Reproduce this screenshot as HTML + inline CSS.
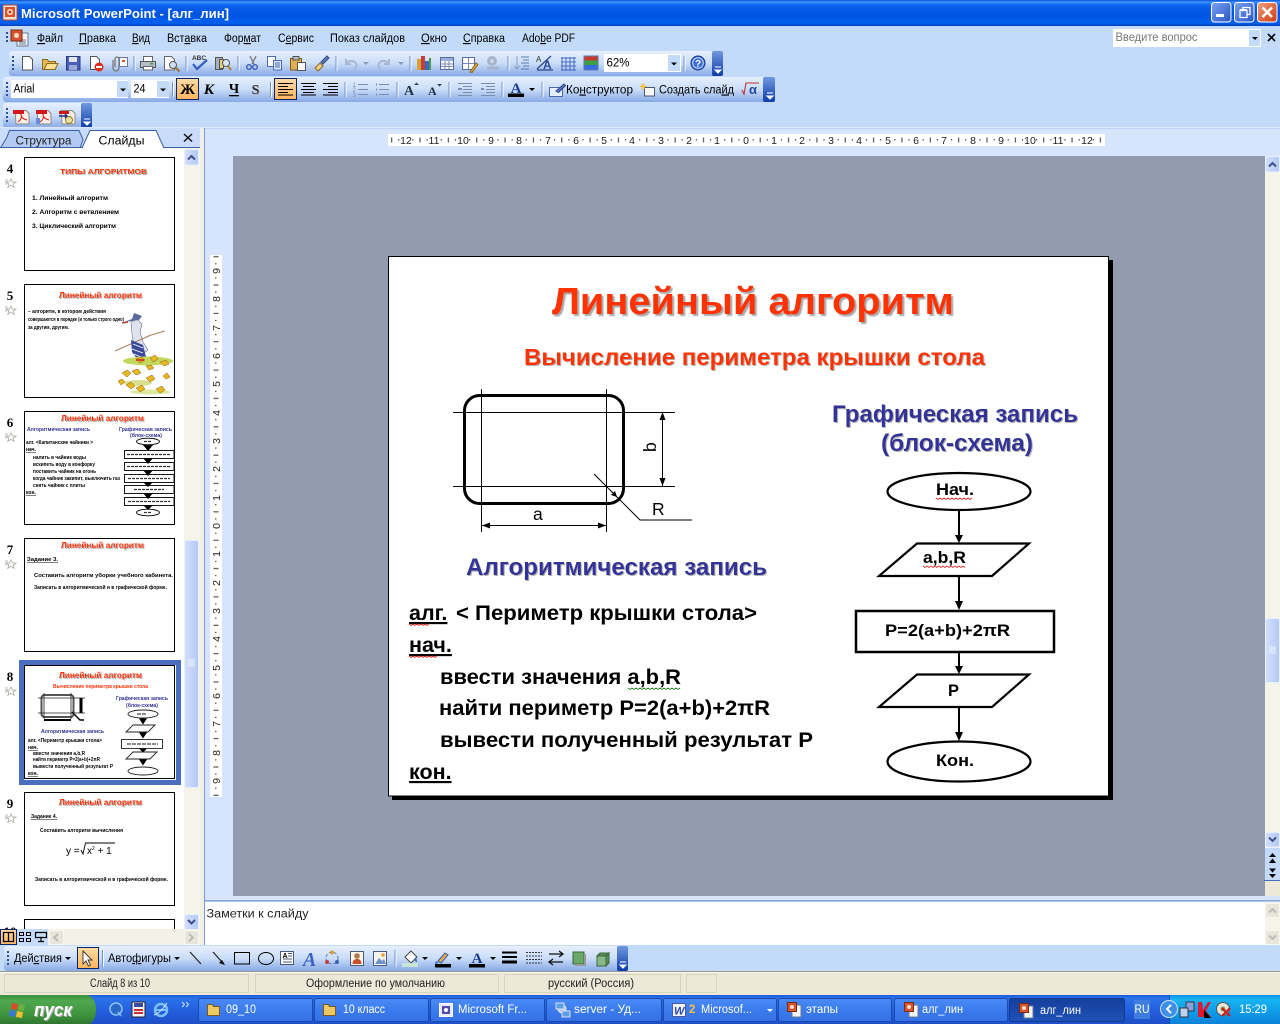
<!DOCTYPE html>
<html lang="ru"><head><meta charset="utf-8"><title>Microsoft PowerPoint</title>
<style>
html,body{margin:0;padding:0;width:1280px;height:1024px;overflow:hidden;background:#c3daf9}
svg{display:block;position:absolute;left:0;top:0}
text{font-family:"Liberation Sans","DejaVu Sans",sans-serif;font-size:11.5px;fill:#000;white-space:pre}
.w{fill:#fff}.b{font-weight:bold}
.t{fill:#ff3300;font-weight:bold}
.bl{fill:#333399;font-weight:bold}
.th{font-size:5px;font-weight:bold}
.n{font-family:"Liberation Serif",serif;font-size:13px;font-weight:bold}
.r{font-size:10.5px;fill:#222}
.u{text-decoration:underline}
</style></head><body>
<svg width="1280" height="1024" viewBox="0 0 1280 1024" xmlns="http://www.w3.org/2000/svg">
<defs>
<linearGradient id="tt" x1="0" y1="0" x2="0" y2="1"><stop offset="0" stop-color="#0a4fd8"/><stop offset=".08" stop-color="#3d95ff"/><stop offset=".2" stop-color="#0a62ee"/><stop offset=".55" stop-color="#0053e1"/><stop offset=".88" stop-color="#0261f0"/><stop offset="1" stop-color="#0042bd"/></linearGradient>
<linearGradient id="tb" x1="0" y1="0" x2="0" y2="1"><stop offset="0" stop-color="#e6f0fe"/><stop offset=".5" stop-color="#c9dcf8"/><stop offset="1" stop-color="#88a9e6"/></linearGradient>
<linearGradient id="ch" x1="0" y1="0" x2="0" y2="1"><stop offset="0" stop-color="#6f98e0"/><stop offset="1" stop-color="#0f3da8"/></linearGradient>
<linearGradient id="or" x1="0" y1="0" x2="0" y2="1"><stop offset="0" stop-color="#ffdca5"/><stop offset="1" stop-color="#ffb35c"/></linearGradient>
<linearGradient id="task" x1="0" y1="0" x2="0" y2="1"><stop offset="0" stop-color="#1f5cd8"/><stop offset=".12" stop-color="#2a74ea"/><stop offset=".5" stop-color="#2560df"/><stop offset="1" stop-color="#1d4fc8"/></linearGradient>
<linearGradient id="tbtn" x1="0" y1="0" x2="0" y2="1"><stop offset="0" stop-color="#4a8cf5"/><stop offset=".5" stop-color="#3b7bee"/><stop offset="1" stop-color="#3570e3"/></linearGradient>
<linearGradient id="tact" x1="0" y1="0" x2="0" y2="1"><stop offset="0" stop-color="#153f9c"/><stop offset="1" stop-color="#1e52b7"/></linearGradient>
<linearGradient id="st" x1="0" y1="0" x2="0" y2="1"><stop offset="0" stop-color="#3c8f3c"/><stop offset=".2" stop-color="#4fa84f"/><stop offset=".7" stop-color="#3c933c"/><stop offset="1" stop-color="#2f752f"/></linearGradient>
<linearGradient id="tr" x1="0" y1="0" x2="0" y2="1"><stop offset="0" stop-color="#0c8fe6"/><stop offset=".15" stop-color="#18b4f2"/><stop offset=".6" stop-color="#0f9ae8"/><stop offset="1" stop-color="#0c82d8"/></linearGradient>
<linearGradient id="sb" x1="0" y1="0" x2="1" y2="0"><stop offset="0" stop-color="#d3e0fb"/><stop offset="1" stop-color="#b3c8f5"/></linearGradient>
<linearGradient id="mn" x1="0" y1="0" x2="1" y2="1"><stop offset="0" stop-color="#7ba2ee"/><stop offset="1" stop-color="#2a55c8"/></linearGradient>
<linearGradient id="cl" x1="0" y1="0" x2="1" y2="1"><stop offset="0" stop-color="#f0a080"/><stop offset="1" stop-color="#cc3a10"/></linearGradient>
<pattern id="rh" x="746" y="134" width="28.35" height="12" patternUnits="userSpaceOnUse"><rect x="6.6" y="5" width="1" height="1.5" fill="#333"/><rect x="13.7" y="3.5" width="1" height="5" fill="#333"/><rect x="20.8" y="5" width="1" height="1.5" fill="#333"/></pattern>
<pattern id="rv" x="210" y="526" width="12" height="28.35" patternUnits="userSpaceOnUse"><rect x="5" y="6.6" width="1.5" height="1" fill="#333"/><rect x="3.5" y="13.7" width="5" height="1" fill="#333"/><rect x="5" y="20.8" width="1.5" height="1" fill="#333"/></pattern>
<filter id="sh" x="-5%" y="-20%" width="110%" height="140%"><feDropShadow dx="2" dy="2" stdDeviation="0.4" flood-color="#a8a8a8"/></filter>
<filter id="s1" x="-5%" y="-20%" width="110%" height="140%"><feDropShadow dx="1" dy="1" stdDeviation="0.2" flood-color="#b0b0b0"/></filter>
</defs>

<!-- base -->
<rect width="1280" height="1024" fill="#c3daf9"/>
<!-- title bar -->
<rect width="1280" height="26" fill="url(#tt)"/>
<rect x="3" y="5" width="14" height="15" rx="1" fill="#e8e2d8" stroke="#c05030"/><rect x="5" y="7" width="10" height="10" fill="#d9532c"/><circle cx="10" cy="12" r="3" fill="#f5e0c8"/><circle cx="10" cy="12" r="1.4" fill="#c03818"/>
<text x="21" y="18" class="w b" style="font-size:13px" textLength="208" lengthAdjust="spacingAndGlyphs">Microsoft PowerPoint - [алг_лин]</text>
<rect x="1211.5" y="2.5" width="19.5" height="19.5" rx="3" fill="url(#mn)" stroke="#fff"/><rect x="1216" y="14" width="8" height="3" fill="#fff"/>
<rect x="1234.5" y="2.5" width="19.5" height="19.5" rx="3" fill="url(#mn)" stroke="#fff"/><path d="M1240 10.5h7v7h-7zM1243 10V7.5h7v7h-2.5" fill="none" stroke="#fff" stroke-width="1.3"/><rect x="1240" y="9" width="7" height="2" fill="#fff"/>
<rect x="1257.5" y="2.5" width="19.5" height="19.5" rx="3" fill="url(#cl)" stroke="#fff"/><path d="M1262.5 7.5l9.5 9.500M1272 7.5l-9.500 9.500" stroke="#fff" stroke-width="2.4"/>

<!-- menu -->
<path d="M7 32v2M7 36v2M7 40v2" stroke="#2a4f9c" stroke-width="2"/>
<rect x="17" y="33" width="11" height="13" fill="#f4f4f0" stroke="#6a7a9a"/><path d="M19 40h7M19 42h7M19 44h7" stroke="#6a7a9a"/><rect x="11" y="30" width="11" height="11" fill="#d9532c" stroke="#7a2a10"/><circle cx="16.5" cy="35.5" r="2.5" fill="#f5e0c8"/>
<text x="37" y="42" textLength="26" lengthAdjust="spacingAndGlyphs"><tspan class="u">Ф</tspan>айл</text>
<text x="79" y="42" textLength="37" lengthAdjust="spacingAndGlyphs"><tspan class="u">П</tspan>равка</text>
<text x="132" y="42" textLength="18" lengthAdjust="spacingAndGlyphs"><tspan class="u">В</tspan>ид</text>
<text x="167" y="42" textLength="40" lengthAdjust="spacingAndGlyphs">Вст<tspan class="u">а</tspan>вка</text>
<text x="224" y="42" textLength="37" lengthAdjust="spacingAndGlyphs">Фор<tspan class="u">м</tspan>ат</text>
<text x="278" y="42" textLength="36" lengthAdjust="spacingAndGlyphs">С<tspan class="u">е</tspan>рвис</text>
<text x="330" y="42" textLength="75" lengthAdjust="spacingAndGlyphs">Показ слайдов</text>
<text x="421" y="42" textLength="26" lengthAdjust="spacingAndGlyphs"><tspan class="u">О</tspan>кно</text>
<text x="463" y="42" textLength="42" lengthAdjust="spacingAndGlyphs"><tspan class="u">С</tspan>правка</text>
<text x="522" y="42" textLength="53" lengthAdjust="spacingAndGlyphs">Ado<tspan class="u">b</tspan>e PDF</text>
<rect x="1113" y="29" width="148" height="18" fill="#fff"/><rect x="1249" y="30" width="11" height="16" fill="#c3daf9"/><path d="M1252 37h6l-3 3z" fill="#000"/>
<text x="1115.5" y="41" style="fill:#777" textLength="82" lengthAdjust="spacingAndGlyphs">Введите вопрос</text>
<path d="M1268 34l7 7M1275 34l-7 7" stroke="#000" stroke-width="1.6"/>

<!-- toolbars -->
<rect x="9" y="51" width="714" height="25" rx="3" fill="url(#tb)"/>
<rect x="712" y="51" width="11" height="25" rx="2" fill="url(#ch)"/><path d="M715 67h6M715 70h6l-3 3z" stroke="#fff" fill="#fff"/>
<rect x="3" y="77" width="772" height="25" rx="3" fill="url(#tb)"/>
<rect x="763" y="77" width="12" height="25" rx="2" fill="url(#ch)"/><path d="M767 93h6M767 96h6l-3 3z" stroke="#fff" fill="#fff"/>
<rect x="3" y="103" width="89" height="25" rx="3" fill="url(#tb)"/>
<rect x="81" y="103" width="11" height="25" rx="2" fill="url(#ch)"/><path d="M84 119h6M84 122h6l-3 3z" stroke="#fff" fill="#fff"/>
<path d="M13 56v2M13 60v2M13 64v2M13 68v2M7 82v2M7 86v2M7 90v2M7 94v2M7 108v2M7 112v2M7 116v2M7 120v2" stroke="#2a4f9c" stroke-width="2"/>

<!-- separators -->
<path d="M134 56v15M186 56v15M238 56v15M336 56v15M410 56v15M508 56v15M684 56v15M172.5 82v15M270.5 82v15M345 82v15M397 82v15M449 82v15M502 82v15M542 82v15" stroke="#6f8fcf"/>
<path d="M135 56v15M187 56v15M239 56v15M337 56v15M411 56v15M509 56v15M685 56v15M173.5 82v15M271.5 82v15M346 82v15M398 82v15M450 82v15M503 82v15M543 82v15" stroke="#fff"/>

<!-- toolbar 1 icons -->
<path d="M22.5 56.5h7l3 3v10.500h-10z" fill="#fff" stroke="#555"/>
<path d="M42.5 59.5h5l1 2h7v8h-13z" fill="#e8b850" stroke="#8a6a20"/><path d="M44 69.5l3-6h11l-3 6z" fill="#ffe090" stroke="#8a6a20"/>
<rect x="66.5" y="56.5" width="13.5" height="13.5" fill="#4a5fb8" stroke="#2a3a80"/><rect x="69" y="57" width="8" height="5" fill="#dfe5f5"/><rect x="69" y="65" width="8" height="5" fill="#9aa8d8"/>
<path d="M90.5 56.5h6l3 3v10h-9z" fill="#fff" stroke="#555"/><circle cx="99" cy="67" r="4.5" fill="#d8301c"/><rect x="96" y="66" width="6" height="2" fill="#fff"/>
<path d="M113 60v8a3 3 0 0 0 6 0V59a2 2 0 0 0-4 0v8" fill="none" stroke="#777" stroke-width="1.3"/><rect x="119.5" y="57.5" width="8" height="9" fill="#fff" stroke="#6a7a9a"/><rect x="122" y="60" width="3" height="2" fill="#d05030"/>
<rect x="143.5" y="56.5" width="9" height="5" fill="#fff" stroke="#666"/><rect x="140.5" y="61.5" width="15" height="6" fill="#b8bcc8" stroke="#555"/><rect x="143.5" y="66.5" width="9" height="3.5" fill="#fff" stroke="#666"/><rect x="150" y="63" width="3" height="1.5" fill="#3aa03a"/>
<path d="M164.5 56.5h7l3 3v10.500h-10z" fill="#fff" stroke="#666"/><circle cx="173" cy="65" r="3.5" fill="#d0e0f8" stroke="#555"/><path d="M175.5 67.5l4 4" stroke="#a07030" stroke-width="2"/>
<text x="192" y="60" style="font-size:6.5px;font-weight:bold;fill:#333" textLength="14" lengthAdjust="spacingAndGlyphs">ABC</text><path d="M193 64l4 5 10-9" fill="none" stroke="#3060c0" stroke-width="2.2"/>
<rect x="215.5" y="57.5" width="7" height="12" fill="#a8b0c8" stroke="#555"/><rect x="219.5" y="59.5" width="4" height="9" fill="#e8d070" stroke="#555"/><circle cx="226" cy="63" r="3.5" fill="#d8e8fa" stroke="#555"/><path d="M228 66l3 4" stroke="#b08030" stroke-width="2"/>
<path d="M250 56l4 8M256 56l-4 8" stroke="#777" stroke-width="1.3"/><circle cx="249" cy="67" r="2.3" fill="none" stroke="#3a5cb0" stroke-width="1.4"/><circle cx="255" cy="67" r="2.3" fill="none" stroke="#3a5cb0" stroke-width="1.4"/>
<rect x="267.5" y="56.5" width="8" height="10" fill="#fff" stroke="#4a6ab0"/><rect x="273.5" y="60.5" width="8" height="9.5" fill="#dfe8fa" stroke="#4a6ab0"/><path d="M275 63h5M275 65h5M275 67h5" stroke="#4a6ab0"/>
<rect x="290.5" y="58.5" width="11" height="11.5" fill="#e0b050" stroke="#7a5a20"/><rect x="293" y="56.5" width="6" height="3.5" fill="#bbb" stroke="#555"/><rect x="297.5" y="62.5" width="8" height="8" fill="#fff" stroke="#555"/>
<path d="M315 68l5-5 3 3-5 5z" fill="#f0d080" stroke="#8a6a20"/><path d="M321 62l6-6 2 2-6 6z" fill="#5a7ab8" stroke="#3a4a80"/>
<path d="M346 59v5h5M346.5 63.5c3-4 10-3 10 2 0 2-1 3-3 4" fill="none" stroke="#a8b8d4" stroke-width="2"/>
<path d="M389 59v5h-5M388.5 63.5c-3-4-10-3-10 2 0 2 1 3 3 4" fill="none" stroke="#a8b8d4" stroke-width="2"/>
<path d="M363 62h6l-3 3zM398 62h6l-3 3z" fill="#8a9cbc"/>
<rect x="417" y="59" width="4" height="11" fill="#d8a030"/><rect x="421" y="56" width="4" height="14" fill="#c04040"/><rect x="425" y="61" width="4" height="9" fill="#3a6ac0"/><rect x="429" y="58" width="2" height="12" fill="#4a9a4a"/>
<rect x="440.5" y="57.5" width="13" height="12" fill="#fff" stroke="#5a6a9a"/><rect x="441" y="58" width="12" height="3" fill="#9ab0dc"/><path d="M445 61v8M449 61v8M441 64h12M441 66.5h12" stroke="#7a8ab0"/>
<rect x="462.5" y="57.5" width="12" height="12" fill="#fff" stroke="#5a6a9a"/><path d="M468.5 58v11M463 63.5h11" stroke="#7a8ab0"/><path d="M470 72l6-9 2 1.5-6 8z" fill="#e8a840" stroke="#8a6a20"/>
<circle cx="492" cy="61" r="5" fill="#a8b4cc"/><path d="M487 68h12" stroke="#a8b4cc" stroke-width="3"/><circle cx="492" cy="61" r="2" fill="#cdd6e8"/>
<path d="M516 57h1v12M514 66l3 3 3-3" fill="none" stroke="#8a9cbc"/><path d="M521 57h8M523 60h6M521 63h8M523 66h6M521 69h8" stroke="#5a7ab0"/>
<path d="M537 69l14-13M537 70h16" stroke="#2a3f90" stroke-width="1.2"/><text x="536" y="62" style="font-size:8px;fill:#333">A</text><text x="543" y="69" style="font-size:12px;font-weight:bold;fill:#2a4aa0">A</text>
<path d="M561 58h15M561 62h15M561 66h15M561 70h15M562 57v14M566 57v14M570 57v14M574 57v14" stroke="#4a6cc0"/>
<rect x="584" y="56" width="14" height="4.5" fill="#c83a30"/><rect x="584" y="60.5" width="14" height="4.5" fill="#3aa040"/><rect x="584" y="65" width="14" height="5" fill="#3a6ae0"/><rect x="584" y="56" width="14" height="14" fill="none" stroke="#5a7ab0"/>
<rect x="604" y="54" width="77" height="18" fill="#fff"/><rect x="668" y="55" width="12" height="16" fill="#c3daf9"/><path d="M671 62.5h6l-3 3z" fill="#000"/>
<text x="606.5" y="66.5" textLength="23" lengthAdjust="spacingAndGlyphs">62%</text>
<circle cx="698" cy="63" r="7" fill="#3a6ad8" stroke="#1a3a90"/><circle cx="698" cy="63" r="5.3" fill="none" stroke="#c8dcfb"/><text x="695" y="67" style="font-size:10px;font-weight:bold;fill:#fff">?</text>

<!-- toolbar 2 -->
<rect x="11" y="80" width="117" height="18" fill="#fff"/><rect x="117" y="81" width="11" height="16" fill="#c3daf9"/><path d="M120 88.5h6l-3 3z" fill="#000"/>
<text x="13.5" y="92.5" textLength="21" lengthAdjust="spacingAndGlyphs">Arial</text>
<rect x="131" y="80" width="38" height="18" fill="#fff"/><rect x="157" y="81" width="12" height="16" fill="#c3daf9"/><path d="M160 88.5h6l-3 3z" fill="#000"/>
<text x="133.5" y="92.5" textLength="12" lengthAdjust="spacingAndGlyphs">24</text>
<rect x="176.5" y="78.5" width="22" height="21" fill="url(#or)" stroke="#0a246a"/>
<text x="187.5" y="94" text-anchor="middle" style="font-family:'Liberation Serif',serif;font-size:15px;font-weight:bold">Ж</text>
<text x="209" y="94" text-anchor="middle" style="font-family:'Liberation Serif',serif;font-size:15px;font-weight:bold;font-style:italic">К</text>
<text x="234" y="93" text-anchor="middle" style="font-family:'Liberation Serif',serif;font-size:14px;font-weight:bold">Ч</text><rect x="229" y="95" width="10" height="1.3" fill="#000"/>
<text x="255.5" y="94" text-anchor="middle" style="font-family:'Liberation Serif',serif;font-size:14px;font-weight:bold;fill:#333" filter="url(#s1)">S</text>
<rect x="274.5" y="78.5" width="22" height="21" fill="url(#or)" stroke="#0a246a"/>
<path d="M278 83.5h15M278 86.5h10M278 89.5h15M278 92.5h10M278 95h15" stroke="#000"/>
<path d="M301 83.5h15M303 86.5h11M301 89.5h15M303 92.5h11M301 95h15" stroke="#000"/>
<path d="M323 83.5h15M328 86.5h10M323 89.5h15M328 92.5h10M323 95h15" stroke="#000"/>
<path d="M358 84.5h10M358 89.5h10M358 94.5h10M379 84.5h10M379 89.5h10M379 94.5h10" stroke="#7a8eb0"/><text x="352.5" y="87" style="font-size:6px;fill:#7a8eb0">1</text><text x="352.5" y="92" style="font-size:6px;fill:#7a8eb0">2</text><text x="352.5" y="97" style="font-size:6px;fill:#7a8eb0">3</text><path d="M376 84.5h1M376 89.5h1M376 94.5h1" stroke="#7a8eb0" stroke-width="2"/>
<text x="404" y="95" style="font-family:'Liberation Serif',serif;font-size:14px;font-weight:bold;fill:#234">A</text><path d="M414 85l2.5-2.500 2.500 2.500z" fill="#345"/>
<text x="428" y="95" style="font-family:'Liberation Serif',serif;font-size:12px;font-weight:bold;fill:#234">A</text><path d="M437 84l2.5 2.500 2.500-2.500z" fill="#345"/>
<path d="M458 83.5h14M463 86.5h9M463 89.5h9M463 92.5h9M458 95.5h14M481 83.5h14M486 86.5h9M486 89.5h9M486 92.5h9M481 95.5h14" stroke="#7a8eb0"/><path d="M462 89l-4 0M484 89h-3" stroke="#7a8eb0" stroke-width="2"/>
<text x="516" y="93" text-anchor="middle" style="font-family:'Liberation Serif',serif;font-size:15px;font-weight:bold;fill:#1a3a90">A</text><rect x="508" y="93.5" width="16" height="3.5" fill="#000"/><path d="M529 88h6l-3 3z" fill="#000"/>
<rect x="549.5" y="87.5" width="13" height="9" fill="#e8eefb" stroke="#4a6ab0"/><path d="M556 91l8-7 1.500 1.500-7 7z" fill="#5a7ac0" stroke="#2a3f90"/>
<text x="566" y="93.5" textLength="67" lengthAdjust="spacingAndGlyphs">Ко<tspan class="u">н</tspan>структор</text>
<rect x="644.5" y="87.5" width="10" height="8.5" fill="#f8f8f4" stroke="#4a5a7a"/><path d="M643 83v7M640 86.5h7M641 84.5l4 4M645 84.5l-4 4" stroke="#f0c040"/>
<text x="659" y="93.5" textLength="75" lengthAdjust="spacingAndGlyphs">Создать сла<tspan class="u">й</tspan>д</text>
<path d="M742 90l2 4 2-11h13" fill="none" stroke="#c03030" stroke-width="1.1"/><text x="749" y="94" style="font-size:13px;fill:#2a4aa0;font-weight:bold">α</text>

<!-- toolbar 3 -->
<g>
<path d="M15 110.5h11l3 3v10.500h-13z" fill="#f8f0e8" stroke="#8a8a80"/><rect x="13" y="110" width="11" height="4" fill="#d01818"/><path d="M18 122c3-2 4-5 3-8 0 3 2 5 6 6" fill="none" stroke="#d01818"/>
<path d="M37 110.5h11l3 3v10.500h-13z" fill="#f8f0e8" stroke="#8a8a80"/><rect x="36" y="110" width="11" height="4" fill="#d01818"/><path d="M40 122c3-2 4-5 3-8 0 3 2 5 6 6" fill="none" stroke="#d01818"/><rect x="36" y="118" width="4" height="6" fill="#6a8ad8"/>
<path d="M61 110.5h11l3 3v10.500h-13z" fill="#f8f0e8" stroke="#8a8a80"/><rect x="59" y="111" width="10" height="3" fill="#d01818"/><path d="M59 116h8l-2-2M67 116l-2 2" fill="none" stroke="#1a2a90" stroke-width="1.4"/><circle cx="69" cy="120" r="3.5" fill="#e8e0a0" stroke="#908020"/>
</g>

<!-- main pane area -->
<rect x="0" y="127" width="1280" height="3" fill="#dbe8fc"/>
<rect x="200" y="128" width="1080" height="774" fill="#d6e5fc"/>
<rect x="0" y="128" width="204" height="20" fill="#c9dcf9"/>
<rect x="200" y="128" width="4" height="817" fill="#f0efe8"/>
<rect x="204" y="128" width="1" height="817" fill="#7a9ad6"/>
<rect x="205" y="128" width="1075" height="1" fill="#bdd3f5"/>

<!-- tabs -->
<path d="M0.5 148l6-10 3-7.500H79l4 9-3 8.500z" fill="#b3cbf3" stroke="#3a5ea8"/>
<path d="M82 148l5-11 3-6.500h66l8 17.500" fill="#fff" stroke="#3a5ea8"/><rect x="84" y="146" width="78" height="4" fill="#fff"/>
<path d="M0 147.5h83M164 147.5h36" stroke="#3a5ea8"/>
<text x="15.5" y="144.5" style="fill:#222" textLength="56" lengthAdjust="spacingAndGlyphs">Структура</text>
<text x="98.5" y="144.5" textLength="46" lengthAdjust="spacingAndGlyphs">Слайды</text>
<path d="M184 134l8 7.500M192 134l-8 7.500" stroke="#111" stroke-width="1.5"/>

<!-- left pane -->
<rect x="0" y="148" width="184" height="782" fill="#fff"/>
<rect x="184" y="148" width="16" height="782" fill="#f5f4ea"/>
<rect x="184.5" y="149.5" width="14" height="15.5" rx="1.5" fill="url(#sb)" stroke="#e9f0fd"/><path d="M188 159.5l3.500-3.500 3.500 3.500" fill="none" stroke="#3a5088" stroke-width="2"/>
<rect x="184.5" y="540.5" width="14" height="247" rx="1.5" fill="url(#sb)" stroke="#e9f0fd"/><path d="M188 660h7M188 662h7M188 664h7M188 666h7" stroke="#eef3fe"/>
<rect x="184.5" y="914.5" width="14" height="15" rx="1.5" fill="url(#sb)" stroke="#e9f0fd"/><path d="M188 920l3.500 3.500 3.500-3.500" fill="none" stroke="#3a5088" stroke-width="2"/>

<!-- thumb numbers -->
<g>
<text x="10" y="173" class="n" text-anchor="middle">4</text>
<text x="10" y="300" class="n" text-anchor="middle">5</text>
<text x="10" y="427" class="n" text-anchor="middle">6</text>
<text x="10" y="554" class="n" text-anchor="middle">7</text>
<text x="10" y="681" class="n" text-anchor="middle">8</text>
<text x="10" y="808" class="n" text-anchor="middle">9</text>
<text x="10" y="936" class="n" text-anchor="middle">10</text>
</g>
<g fill="none" stroke="#a8a8a0" stroke-width=".8">
<path d="M11 179l1.500 3h3.500l-2.800 2 1 3.300-3.200-2-3.200 2 1-3.300-2.800-2h3.500z"/>
<path d="M11 306l1.500 3h3.500l-2.800 2 1 3.300-3.200-2-3.200 2 1-3.300-2.800-2h3.500zM11 433l1.500 3h3.500l-2.800 2 1 3.300-3.200-2-3.200 2 1-3.300-2.800-2h3.500zM11 560l1.500 3h3.500l-2.800 2 1 3.300-3.200-2-3.200 2 1-3.300-2.800-2h3.500zM11 687l1.500 3h3.500l-2.800 2 1 3.300-3.200-2-3.200 2 1-3.300-2.800-2h3.500zM11 814l1.500 3h3.500l-2.800 2 1 3.300-3.200-2-3.200 2 1-3.300-2.800-2h3.500z"/>
<path d="M5 180h3M5 182h2M5 184h2M5 307h3M5 309h2M5 311h2M5 434h3M5 436h2M5 438h2M5 561h3M5 563h2M5 565h2M5 688h3M5 690h2M5 692h2M5 815h3M5 817h2M5 819h2"/>
</g>

<!-- thumb frames -->
<rect x="21.5" y="662.5" width="157" height="120" fill="#fff" stroke="#4a6fc0" stroke-width="5"/>
<g fill="#fff" stroke="#000">
<rect x="24.5" y="157.5" width="150" height="113"/>
<rect x="24.5" y="284.5" width="150" height="113"/>
<rect x="24.5" y="411.5" width="150" height="113"/>
<rect x="24.5" y="538.5" width="150" height="113"/>
<rect x="24.5" y="665.5" width="150" height="113"/>
<rect x="24.5" y="792.5" width="150" height="113"/>
<rect x="24.5" y="919.5" width="150" height="20"/>
</g>

<!-- thumb 4 -->
<text x="60" y="174" class="t" style="font-size:7.5px" textLength="87" lengthAdjust="spacingAndGlyphs" filter="url(#s1)">ТИПЫ АЛГОРИТМОВ</text>
<text x="32" y="200" class="th" style="font-size:6px" textLength="76" lengthAdjust="spacingAndGlyphs">1. Линейный алгоритм</text>
<text x="32" y="214" class="th" style="font-size:6px" textLength="87" lengthAdjust="spacingAndGlyphs">2. Алгоритм с ветвлением</text>
<text x="32" y="228" class="th" style="font-size:6px" textLength="84" lengthAdjust="spacingAndGlyphs">3. Циклический алгоритм</text>
<!-- thumb 5 -->
<text x="59" y="298" class="t" style="font-size:8.5px" textLength="83" lengthAdjust="spacingAndGlyphs" filter="url(#s1)">Линейный алгоритм</text>
<text x="28" y="313" class="th" textLength="78" lengthAdjust="spacingAndGlyphs">– алгоритм, в котором действия</text>
<text x="28" y="321" class="th" textLength="96" lengthAdjust="spacingAndGlyphs">совершаются в порядке (и только строго одно)</text>
<text x="28" y="329" class="th" textLength="41" lengthAdjust="spacingAndGlyphs">за другим, другим.</text>
<g>
<path d="M131 322l6-3 5 5-2 8 3 10 5 8-8 6-6-10-2-12z" fill="#dfe3ee" stroke="#6a7090" stroke-width=".6"/>
<path d="M124 322l8-3 2-6 8 3-3 4-7 1z" fill="#5a6a9a"/><path d="M122 323l6-1" stroke="#c04030" stroke-width="1.5"/><path d="M115 351l36-16 14-4" stroke="#a08060" fill="none"/>
<path d="M131 340l12 5 3 12-8 3-6-8z" fill="#3a4a9a"/><path d="M133 344l10 4M132 349l11 4M134 354l9 4" stroke="#fff" stroke-width=".9"/>
<ellipse cx="148" cy="361" rx="25" ry="4.5" fill="#c4d860"/><ellipse cx="138" cy="383" rx="14" ry="3" fill="#d8e090"/><ellipse cx="150" cy="392" rx="20" ry="2.5" fill="#dce8a0"/>
<path d="M136 359l5-2 4 3-5 3zM150 358l5-3 3 4-5 3zM160 362l6-2 3 4-5 2zM146 366l5-1 3 3-5 2zM122 373l5-3 4 3-4 4zM132 371l6-2 3 4-5 2zM126 385l5-3 4 4-4 3zM136 388l6-3 3 4-5 3zM146 378l6-3 3 4-5 3zM156 389l6-3 3 4-5 3zM163 376l4-3 3 4-4 2zM118 381l4-2 3 3-4 3z" fill="#e8b820" stroke="#8a5a10" stroke-width=".5"/>
<path d="M136 360h8" stroke="#d04820" stroke-width="2"/>
</g>
<!-- thumb 6 -->
<text x="61" y="421" class="t" style="font-size:8.5px" textLength="83" lengthAdjust="spacingAndGlyphs" filter="url(#s1)">Линейный алгоритм</text>
<text x="27" y="431" class="th bl" textLength="63" lengthAdjust="spacingAndGlyphs">Алгоритмическая запись</text>
<text x="119" y="431" class="th bl" textLength="53" lengthAdjust="spacingAndGlyphs">Графическая запись</text>
<text x="130" y="437" class="th bl" textLength="32" lengthAdjust="spacingAndGlyphs">(блок-схема)</text>
<text x="26" y="444" class="th" textLength="67" lengthAdjust="spacingAndGlyphs">алг. &lt;Капитанские чайники &gt;</text>
<text x="26" y="451" class="th u">нач.</text>
<text x="33" y="459" class="th" textLength="53" lengthAdjust="spacingAndGlyphs">налить в чайник воды</text>
<text x="33" y="466" class="th" textLength="62" lengthAdjust="spacingAndGlyphs">вскипеть воду в конфорку</text>
<text x="33" y="473" class="th" textLength="63" lengthAdjust="spacingAndGlyphs">поставить чайник на огонь</text>
<text x="33" y="480" class="th" textLength="87" lengthAdjust="spacingAndGlyphs">когда чайник закипит, выключить газ</text>
<text x="33" y="487" class="th" textLength="52" lengthAdjust="spacingAndGlyphs">снять чайник с плиты</text>
<text x="26" y="494" class="th u">кон.</text>
<g fill="#fff" stroke="#000" stroke-width=".9">
<ellipse cx="148" cy="441.5" rx="11.5" ry="3.3"/><rect x="124.5" y="450.5" width="49.5" height="8"/><rect x="124.5" y="462.5" width="49.5" height="8"/><rect x="124.5" y="474.5" width="49.5" height="8"/><rect x="124.5" y="485.5" width="49.5" height="8"/><rect x="124.5" y="497.5" width="49.5" height="8"/><ellipse cx="148" cy="512.5" rx="11.5" ry="3.3"/>
</g>
<path d="M143 445h10l-5 6zM143 458h10l-5 6zM143 470h10l-5 6zM143 482h10l-5 5zM143 493h10l-5 6zM143 505h10l-5 5z" fill="#000"/>
<path d="M127 454.5h44M127 466.5h44M128 478.5h42M134 489.5h30M128 501.5h42M144 441.5h8M144 512.5h8" stroke="#333" stroke-width="1.3" stroke-dasharray="3 1"/>
<!-- thumb 7 -->
<text x="61" y="548" class="t" style="font-size:8.5px" textLength="83" lengthAdjust="spacingAndGlyphs" filter="url(#s1)">Линейный алгоритм</text>
<text x="27" y="561" class="th u" textLength="31" lengthAdjust="spacingAndGlyphs">Задание 3.</text>
<text x="34" y="577" class="th" textLength="139" lengthAdjust="spacingAndGlyphs">Составить алгоритм уборки учебного кабинета.</text>
<text x="34" y="589" class="th" textLength="133" lengthAdjust="spacingAndGlyphs">Записать в алгоритмической и в графической форме.</text>
<!-- thumb 8 -->
<text x="59" y="678" class="t" style="font-size:8.5px" textLength="83" lengthAdjust="spacingAndGlyphs" filter="url(#s1)">Линейный алгоритм</text>
<text x="53" y="688" class="t" style="font-size:5.5px" textLength="95" lengthAdjust="spacingAndGlyphs">Вычисление периметра крышки стола</text>
<rect x="41.5" y="695" width="32" height="22" rx="3" fill="none" stroke="#555" stroke-width="2"/><path d="M44 693v26M71 693v26M38 698h47M38 713h47" stroke="#222" stroke-width=".8"/><path d="M44 720h27" stroke="#000" stroke-width="2"/><path d="M81 698v15" stroke="#000" stroke-width="3"/><path d="M72 712l8 8h4" stroke="#000" fill="none" stroke-width="1.4"/>
<text x="116" y="700" class="th bl" textLength="52" lengthAdjust="spacingAndGlyphs">Графическая запись</text>
<text x="126" y="707" class="th bl" textLength="32" lengthAdjust="spacingAndGlyphs">(блок-схема)</text>
<text x="41" y="733" class="th bl" textLength="63" lengthAdjust="spacingAndGlyphs">Алгоритмическая запись</text>
<text x="28" y="742" class="th" textLength="74" lengthAdjust="spacingAndGlyphs">алг. &lt;Периметр крышки стола&gt;</text>
<text x="28" y="749" class="th u">нач.</text>
<text x="33" y="755" class="th" textLength="52" lengthAdjust="spacingAndGlyphs">ввести значения a,b,R</text>
<text x="33" y="761" class="th" textLength="67" lengthAdjust="spacingAndGlyphs">найти периметр P=2(a+b)+2πR</text>
<text x="33" y="768" class="th" textLength="80" lengthAdjust="spacingAndGlyphs">вывести полученный результат P</text>
<text x="28" y="775" class="th u">кон.</text>
<g fill="#fff" stroke="#222" stroke-width=".9">
<ellipse cx="143" cy="714" rx="15" ry="4"/><path d="M133 725h22l-7 7h-22z"/><rect x="121.5" y="739.5" width="41" height="9"/><path d="M133 752h24l-7 7h-24z"/><ellipse cx="143" cy="771" rx="15" ry="4"/>
</g>
<path d="M139 718.5h8l-4 6zM139 732.5h8l-4 6zM139 748.5h8l-4 4zM139 759.5h8l-4 6z" fill="#000"/>
<path d="M127 744h31M137 714h10" stroke="#444" stroke-width="1.2" stroke-dasharray="4 1"/>
<!-- thumb 9 -->
<text x="59" y="805" class="t" style="font-size:8.5px" textLength="83" lengthAdjust="spacingAndGlyphs" filter="url(#s1)">Линейный алгоритм</text>
<text x="31" y="818" class="th u" textLength="26" lengthAdjust="spacingAndGlyphs">Задание 4.</text>
<text x="40" y="832" class="th" textLength="83" lengthAdjust="spacingAndGlyphs">Составить алгоритм вычисления</text>
<text x="66" y="854" style="font-size:10px">y =</text>
<path d="M81 850l2 4 2.500-11H115" fill="none" stroke="#000" stroke-width=".9"/>
<text x="87" y="854" style="font-size:10px">x<tspan style="font-size:5px" dy="-4">2</tspan><tspan dy="4"> + 1</tspan></text>
<text x="35" y="881" class="th" textLength="133" lengthAdjust="spacingAndGlyphs">Записать в алгоритмической и в графической форме.</text>

<!-- view strip -->
<rect x="0" y="929" width="48" height="16" fill="#c3daf9"/><rect x="48" y="929" width="152" height="16" fill="#f3f2e8"/>
<rect x="49.5" y="930.5" width="14" height="14" rx="1" fill="#e8e6da" stroke="#f8f8f2"/><path d="M58 934l-4 3.500 4 3.500" fill="none" stroke="#bbb" stroke-width="2"/>
<rect x="184.5" y="930.5" width="14" height="14" rx="1" fill="#e8e6da" stroke="#f8f8f2"/><path d="M189 934l4 3.500-4 3.500" fill="none" stroke="#bbb" stroke-width="2"/>
<rect x="0.5" y="929.5" width="16" height="15" fill="url(#or)" stroke="#0a246a"/><path d="M3.500 932.500h10v9h-10zM8.500 932.500v9" fill="none" stroke="#000" stroke-width="1.3"/>
<path d="M19.500 932.500h4v3h-4zM26.500 932.500h4v3h-4zM19.500 938.500h4v3h-4zM26.500 938.500h4v3h-4z" fill="none" stroke="#000"/>
<path d="M35.500 932.500h11v5h-11zM41 938v3M38 941.500h6" fill="none" stroke="#000" stroke-width="1.2"/>

<!-- right scrollbar + gray area -->
<rect x="233" y="156" width="1032" height="740" fill="#939bb1"/>
<rect x="1265" y="156" width="15" height="740" fill="#f5f4ea"/>
<rect x="1265.5" y="156.5" width="14" height="15.5" rx="1.5" fill="url(#sb)" stroke="#e9f0fd"/><path d="M1269 166.500l3.500-3.500 3.500 3.500" fill="none" stroke="#3a5088" stroke-width="2"/>
<rect x="1265.5" y="618.5" width="14" height="64" rx="1.5" fill="url(#sb)" stroke="#e9f0fd"/><path d="M1269 647h7M1269 649h7M1269 651h7M1269 653h7" stroke="#eef3fe"/>
<rect x="1265.5" y="832.5" width="14" height="14.5" rx="1.5" fill="url(#sb)" stroke="#e9f0fd"/><path d="M1269 837.500l3.500 3.500 3.500-3.500" fill="none" stroke="#3a5088" stroke-width="2"/>
<rect x="1265" y="848" width="15" height="32" fill="#c3daf9"/><rect x="1264" y="880" width="16" height="1" fill="#4a6cc0"/><rect x="1265" y="881" width="15" height="15" fill="#ece9d8"/>
<path d="M1269 857l3.500-4 3.500 4zM1269 863l3.500-4.500 3.500 4.500zM1269 868.500l3.500 4 3.500-4zM1269 874l3.500 4 3.500-4z" fill="#000"/>

<!-- rulers -->
<rect x="388" y="134" width="717" height="12" fill="#fff"/><rect x="388" y="134" width="717" height="12" fill="url(#rh)"/>
<g text-anchor="middle">
<text class="r" x="406" y="144">12</text><text class="r" x="434" y="144">11</text><text class="r" x="463" y="144">10</text><text class="r" x="491" y="144">9</text><text class="r" x="519" y="144">8</text><text class="r" x="548" y="144">7</text><text class="r" x="576" y="144">6</text><text class="r" x="604" y="144">5</text><text class="r" x="632" y="144">4</text><text class="r" x="661" y="144">3</text><text class="r" x="689" y="144">2</text><text class="r" x="717" y="144">1</text><text class="r" x="746" y="144">0</text><text class="r" x="774" y="144">1</text><text class="r" x="802" y="144">2</text><text class="r" x="831" y="144">3</text><text class="r" x="859" y="144">4</text><text class="r" x="888" y="144">5</text><text class="r" x="916" y="144">6</text><text class="r" x="944" y="144">7</text><text class="r" x="973" y="144">8</text><text class="r" x="1001" y="144">9</text><text class="r" x="1030" y="144">10</text><text class="r" x="1058" y="144">11</text><text class="r" x="1087" y="144">12</text>
</g>
<rect x="210" y="255" width="12" height="542" fill="#fff"/><rect x="210" y="255" width="12" height="542" fill="url(#rv)"/>
<g text-anchor="middle">
<text class="r" transform="translate(220,271) rotate(-90)">9</text><text class="r" transform="translate(220,299) rotate(-90)">8</text><text class="r" transform="translate(220,328) rotate(-90)">7</text><text class="r" transform="translate(220,356) rotate(-90)">6</text><text class="r" transform="translate(220,384) rotate(-90)">5</text><text class="r" transform="translate(220,413) rotate(-90)">4</text><text class="r" transform="translate(220,441) rotate(-90)">3</text><text class="r" transform="translate(220,469) rotate(-90)">2</text><text class="r" transform="translate(220,498) rotate(-90)">1</text><text class="r" transform="translate(220,526) rotate(-90)">0</text><text class="r" transform="translate(220,554) rotate(-90)">1</text><text class="r" transform="translate(220,583) rotate(-90)">2</text><text class="r" transform="translate(220,611) rotate(-90)">3</text><text class="r" transform="translate(220,639) rotate(-90)">4</text><text class="r" transform="translate(220,668) rotate(-90)">5</text><text class="r" transform="translate(220,696) rotate(-90)">6</text><text class="r" transform="translate(220,724) rotate(-90)">7</text><text class="r" transform="translate(220,753) rotate(-90)">8</text><text class="r" transform="translate(220,781) rotate(-90)">9</text>
</g>

<!-- slide -->
<rect x="392" y="260" width="721" height="540" fill="#000"/>
<rect x="388.5" y="256.5" width="720" height="539.5" fill="#fff" stroke="#000"/>
<text x="552" y="314" class="t" style="font-size:38px" textLength="402" lengthAdjust="spacingAndGlyphs" filter="url(#sh)">Линейный алгоритм</text>
<text x="524" y="365" class="t" style="font-size:23px" textLength="461" lengthAdjust="spacingAndGlyphs" filter="url(#s1)">Вычисление периметра крышки стола</text>
<text x="832" y="422" class="bl" style="font-size:24px" textLength="246" lengthAdjust="spacingAndGlyphs" filter="url(#s1)">Графическая запись</text>
<text x="881" y="451" class="bl" style="font-size:24px" textLength="152" lengthAdjust="spacingAndGlyphs" filter="url(#s1)">(блок-схема)</text>
<text x="466" y="575" class="bl" style="font-size:24px" textLength="301" lengthAdjust="spacingAndGlyphs" filter="url(#s1)">Алгоритмическая запись</text>

<g>
<text x="409" y="620" class="b u" style="font-size:21.5px">алг.</text>
<text x="456" y="620" class="b" style="font-size:21.5px" textLength="301" lengthAdjust="spacingAndGlyphs">&lt; Периметр крышки стола&gt;</text>
<text x="409" y="652" class="b u" style="font-size:21.5px">нач.</text>
<text x="440" y="684" class="b" style="font-size:21.5px" textLength="241" lengthAdjust="spacingAndGlyphs">ввести значения a,b,R</text>
<text x="439" y="715" class="b" style="font-size:21.5px" textLength="331" lengthAdjust="spacingAndGlyphs">найти периметр P=2(a+b)+2πR</text>
<text x="440" y="747" class="b" style="font-size:21.5px" textLength="373" lengthAdjust="spacingAndGlyphs">вывести полученный результат P</text>
<text x="409" y="779" class="b u" style="font-size:21.5px">кон.</text>
</g>
<path d="M409 624l2 1.500 2-1.500 2 1.500 2-1.500 2 1.500 2-1.500 2 1.500 2-1.500 2 1.500 2-1.500M409 656l2 1.500 2-1.500 2 1.500 2-1.500 2 1.500 2-1.500 2 1.500 2-1.500 2 1.500 2-1.500 2 1.500 2-1.500 2 1.500 2-1.500" fill="none" stroke="#e02020" stroke-width=".8"/>
<path d="M628 688l2 1.500 2-1.500 2 1.500 2-1.500 2 1.500 2-1.500 2 1.500 2-1.500 2 1.500 2-1.500 2 1.500 2-1.500 2 1.500 2-1.500 2 1.500 2-1.500 2 1.500 2-1.500 2 1.500 2-1.500 2 1.500 2-1.500 2 1.500 2-1.500 2 1.500 2-1.500" fill="none" stroke="#208020" stroke-width=".8"/>

<!-- diagram -->
<rect x="464.5" y="395.5" width="159" height="108" rx="15" fill="none" stroke="#000" stroke-width="3"/>
<path d="M481.500 389v143M606.500 389v143M453 412.500h222M453 486.500h222" stroke="#000"/>
<path d="M594 474l46 46h52M662.500 413v73M482 525.500h124" fill="none" stroke="#000"/>
<path d="M662.500 412l-3 8h6zM662.500 486l-3-8h6zM482 525.500l8-3v6zM606 525.500l-8-3v6zM617 497l-6-2 4-4z" fill="#000"/>
<text x="533" y="520" style="font-size:17.5px">a</text>
<text transform="translate(656,452) rotate(-90)" style="font-size:17.5px">b</text>
<text x="652" y="515" style="font-size:17.5px">R</text>

<!-- flowchart -->
<g fill="#fff" stroke="#000" stroke-width="2.2">
<ellipse cx="959" cy="491.5" rx="71.5" ry="18.5"/>
<path d="M917 543.5h112l-37 32.500H879z"/>
<rect x="856" y="611" width="198" height="41" stroke-width="2.5"/>
<path d="M917 674.5h112l-37 32.500H879z"/>
<ellipse cx="959" cy="761.5" rx="71.5" ry="20"/>
</g>
<path d="M959 510v26M959 576v26M959 652v16M959 707v26" stroke="#000" stroke-width="2"/>
<path d="M955 535h8l-4 8zM955 601h8l-4 9zM955 666h8l-4 8zM955 732h8l-4 9z" fill="#000"/>
<text x="936" y="495" class="b" style="font-size:16.5px" textLength="38" lengthAdjust="spacingAndGlyphs">Нач.</text>
<text x="923" y="563" class="b" style="font-size:16.5px" textLength="43" lengthAdjust="spacingAndGlyphs">a,b,R</text>
<text x="885" y="636" class="b" style="font-size:16.5px" textLength="125" lengthAdjust="spacingAndGlyphs">P=2(a+b)+2πR</text>
<text x="948" y="696" class="b" style="font-size:16.5px">P</text>
<text x="936" y="766" class="b" style="font-size:16.5px" textLength="38" lengthAdjust="spacingAndGlyphs">Кон.</text>
<path d="M936 498l2 1.500 2-1.500 2 1.500 2-1.500 2 1.500 2-1.500 2 1.500 2-1.500 2 1.500 2-1.500 2 1.500 2-1.500 2 1.500 2-1.500 2 1.500 2-1.500 2 1.500 2-1.500M923 566l2 1.500 2-1.500 2 1.500 2-1.500 2 1.500 2-1.500 2 1.500 2-1.500 2 1.500 2-1.500 2 1.500 2-1.500 2 1.500 2-1.500 2 1.500 2-1.500 2 1.500 2-1.500 2 1.500 2-1.500 2 1.500" fill="none" stroke="#e02020" stroke-width=".8"/>

<!-- notes -->
<rect x="205" y="896" width="1075" height="6" fill="#d6e5fc"/><rect x="205" y="900" width="1075" height="1.5" fill="#8aa7dd"/>
<rect x="205" y="902" width="1060" height="43" fill="#fff"/>
<rect x="1265" y="902" width="15" height="43" fill="#f5f4ea"/>
<rect x="1265.5" y="903.5" width="14" height="14" rx="1" fill="#e8e6da" stroke="#f8f8f2"/><path d="M1269 912.500l3.500-3.500 3.500 3.500" fill="none" stroke="#bbb" stroke-width="2"/>
<rect x="1265.5" y="930.5" width="14" height="14" rx="1" fill="#e8e6da" stroke="#f8f8f2"/><path d="M1269 935.500l3.500 3.500 3.500-3.500" fill="none" stroke="#bbb" stroke-width="2"/>
<text x="206.5" y="917.5" style="fill:#222" textLength="102" lengthAdjust="spacingAndGlyphs">Заметки к слайду</text>

<!-- draw toolbar -->
<rect x="0" y="945" width="1280" height="26" fill="#c3daf9"/>
<rect x="4" y="946" width="624" height="25" rx="3" fill="url(#tb)"/>
<rect x="617" y="946" width="11" height="25" rx="2" fill="url(#ch)"/><path d="M620 962h6M620 965h6l-3 3z" stroke="#fff" fill="#fff"/>
<path d="M8 951v2M8 955v2M8 959v2M8 963v2" stroke="#2a4f9c" stroke-width="2"/>
<text x="14" y="962" textLength="48" lengthAdjust="spacingAndGlyphs">Дей<tspan class="u">с</tspan>твия</text><path d="M65 957h6l-3 3z" fill="#000"/>
<rect x="77.5" y="947.5" width="21" height="21" fill="url(#or)" stroke="#0a246a"/><path d="M83 951v13l3-3 2.500 5 2-1-2.500-5h4z" fill="#fff" stroke="#333" stroke-width=".9"/>
<path d="M102.500 950v17" stroke="#6f8fcf"/><path d="M103.500 950v17" stroke="#fff"/>
<text x="108" y="962" textLength="63" lengthAdjust="spacingAndGlyphs">Авто<tspan class="u">ф</tspan>игуры</text><path d="M174 957h6l-3 3z" fill="#000"/>
<path d="M190 952l11 12" stroke="#222" stroke-width="1.2"/>
<path d="M213 952l9 10" stroke="#222" stroke-width="1.2"/><path d="M225 965l-6-2 3-3z" fill="#000"/>
<rect x="234.5" y="952.5" width="15" height="11.5" fill="none" stroke="#000"/>
<ellipse cx="266" cy="958.5" rx="7.5" ry="6" fill="none" stroke="#000"/>
<rect x="280.5" y="951.5" width="13" height="13" fill="#fff" stroke="#4a5a7a"/><text x="282.5" y="958" style="font-size:7px;font-weight:bold">A</text><path d="M288 953.500h4M288 956h4M283 959h9M283 962h9" stroke="#4a5a7a"/>
<text x="303" y="966" style="font-family:'Liberation Serif',serif;font-size:20px;font-weight:bold;font-style:italic;fill:#3a64c0">A</text>
<circle cx="332" cy="958" r="6" fill="none" stroke="#5a7ab0" stroke-dasharray="3 2"/><circle cx="332" cy="952.5" r="2" fill="#d0a030"/><circle cx="327" cy="962" r="2" fill="#c04040"/><circle cx="337" cy="962" r="2" fill="#4060b0"/>
<rect x="350.5" y="951.5" width="13" height="14" fill="#fbf6e8" stroke="#4a5a7a"/><circle cx="357" cy="956" r="2.8" fill="#b07848"/><path d="M352.500 964c0-4 2.500-5 4.500-5s4.500 1 4.500 5z" fill="#c85030"/>
<rect x="373.5" y="951.5" width="13" height="14" fill="#f4f4ee" stroke="#4a5a7a"/><path d="M375 964l4-6 3 3 2-2 2 5z" fill="#7090c8"/><circle cx="383" cy="955" r="1.7" fill="#e8a030"/>
<path d="M395 950v17" stroke="#6f8fcf"/><path d="M396 950v17" stroke="#fff"/>
<path d="M405 957l6-6 6 6-6 6z" fill="#fff" stroke="#444"/><path d="M415 957c2 2 2 4 2 5-2 0-3-2-2-5z" fill="#3a6ac0"/><rect x="402" y="963" width="16" height="4" fill="#c8e4d4"/><path d="M422 957h6l-3 3z" fill="#000"/>
<path d="M438 961l7-8 3 2-7 8z" fill="#e8a840" stroke="#3a5ab0"/><path d="M436 961l3 2-4 1z" fill="#3a6ac0"/><rect x="435" y="964" width="16" height="3.5" fill="#000"/><path d="M456 957h6l-3 3z" fill="#000"/>
<text x="477" y="963" text-anchor="middle" style="font-family:'Liberation Serif',serif;font-size:15px;font-weight:bold;fill:#1a3a90">A</text><rect x="469" y="964" width="16" height="3.5" fill="#000"/><path d="M490 957h6l-3 3z" fill="#000"/>
<path d="M502 952.500h15M502 957h15" stroke="#000" stroke-width="2"/><path d="M502 962h15" stroke="#000" stroke-width="3"/>
<path d="M526 952.500h16M526 956h16M526 959.500h16M526 963h16" stroke="#333" stroke-dasharray="2 1"/>
<path d="M549 954h14M559 951l4 3-4 3M549 962h14M553 959l-4 3 4 3" fill="none" stroke="#111" stroke-width="1.3"/>
<rect x="573" y="952" width="11" height="12" fill="#6aa86a" stroke="#3a6a3a"/><rect x="575" y="964" width="11" height="2" fill="#999"/><rect x="584" y="954" width="2" height="12" fill="#999"/>
<path d="M597 956h9v10h-9z" fill="#88b888" stroke="#3a6a3a"/><path d="M597 956l3-3h9l-3 3zM606 956l3-3v10l-3 3z" fill="#5a8a5a" stroke="#3a6a3a"/>

<!-- status bar -->
<rect x="0" y="971" width="1280" height="24" fill="#ece9d8"/><rect x="0" y="971" width="1280" height="1" fill="#9a9a8c"/><rect x="0" y="972" width="1280" height="1" fill="#fff" opacity=".6"/>
<g fill="none" stroke="#d8d4c0"><rect x="4.5" y="974.5" width="244" height="18"/><rect x="255.5" y="974.5" width="243" height="18"/><rect x="504.5" y="974.5" width="176" height="18"/><rect x="686.5" y="974.5" width="30" height="18"/></g>
<text x="90" y="987" style="fill:#222" textLength="60" lengthAdjust="spacingAndGlyphs">Слайд 8 из 10</text>
<text x="306" y="987" style="fill:#222" textLength="139" lengthAdjust="spacingAndGlyphs">Оформление по умолчанию</text>
<text x="548" y="987" style="fill:#222" textLength="86" lengthAdjust="spacingAndGlyphs">русский (Россия)</text>

<!-- taskbar -->
<rect x="0" y="995" width="1280" height="29" fill="url(#task)"/>
<path d="M0 995h88q8 4 8 14.500T90 1024H0z" fill="url(#st)"/>
<path d="M12 1003l6 1-1 6-6-1z" fill="#e0482a"/><path d="M19 1004l6 1-1 6-6-1z" fill="#68b040"/><path d="M10 1010l6 1-1 6-6-1z" fill="#3a78d8"/><path d="M17 1011l6 1-1 6-6-1z" fill="#f0c030"/>
<text x="34" y="1016" style="font-size:18px;font-weight:bold;font-style:italic;fill:#fff" textLength="38" lengthAdjust="spacingAndGlyphs" filter="url(#s1)">пуск</text>
<circle cx="116" cy="1009" r="6" fill="#2a68c8" stroke="#8ac0f8" stroke-width="1.5"/><path d="M118 1012l3 4" stroke="#8ac0f8" stroke-width="1.5"/>
<rect x="132" y="1002" width="13" height="15" fill="#f4f4f8" stroke="#223"/><rect x="134" y="1003" width="9" height="4" fill="#3a4a9a"/><path d="M134 1010h9M134 1013h9" stroke="#c83030" stroke-width="2"/>
<circle cx="161" cy="1010" r="6" fill="none" stroke="#7ac0f8" stroke-width="2.5"/><path d="M156 1010h10" stroke="#7ac0f8" stroke-width="2"/><path d="M154 1015c4-1 9-6 13-12" stroke="#d8e8fc" fill="none"/>
<path d="M182 1002l2.500 2.500-2.500 2.500M186 1002l2.500 2.500-2.500 2.500" fill="none" stroke="#cfe0fb"/>

<g stroke="#1b4bb0"><rect x="198.5" y="998.5" width="114" height="23" rx="2" fill="url(#tbtn)"/><rect x="314.5" y="998.5" width="114" height="23" rx="2" fill="url(#tbtn)"/><rect x="430.5" y="998.5" width="114" height="23" rx="2" fill="url(#tbtn)"/><rect x="546.5" y="998.5" width="115" height="23" rx="2" fill="url(#tbtn)"/><rect x="663.5" y="998.5" width="113" height="23" rx="2" fill="url(#tbtn)"/><rect x="778.5" y="998.5" width="113" height="23" rx="2" fill="url(#tbtn)"/><rect x="894.5" y="998.5" width="113" height="23" rx="2" fill="url(#tbtn)"/></g>
<rect x="1009.5" y="998.5" width="115" height="23" rx="2" fill="url(#tact)" stroke="#123a90"/>
<path d="M207.500 1004.500h5l1 2h6v9h-12z" fill="#eec860" stroke="#7a5a20"/><path d="M323.500 1004.500h5l1 2h6v9h-12z" fill="#eec860" stroke="#7a5a20"/>
<rect x="439.5" y="1003.5" width="13" height="13" fill="#e8ecf8" stroke="#fff"/><rect x="442" y="1006" width="8" height="8" fill="#5a4ab0"/><circle cx="446" cy="1010" r="2" fill="#fff"/>
<circle cx="562" cy="1009" r="4" fill="#b8c8e8" stroke="#e8f0fc"/><rect x="556" y="1003" width="8" height="6" fill="#5aa0e8" stroke="#dde"/><rect x="562" y="1011" width="8" height="6" fill="#5aa0e8" stroke="#dde"/>
<rect x="672.5" y="1003.5" width="13" height="13" fill="#f4f4f8" stroke="#4a5aa0"/><text x="674" y="1014.5" style="font-size:11px;font-weight:bold;font-style:italic;fill:#2a4ab0">W</text>
<g>
<rect x="792" y="1005" width="9" height="12" fill="#f4f4f0" stroke="#6a7a9a"/><rect x="787.5" y="1002.5" width="9" height="9" fill="#d9532c" stroke="#7a2a10"/><circle cx="792" cy="1007" r="2" fill="#f5e0c8"/>
<rect x="909" y="1005" width="9" height="12" fill="#f4f4f0" stroke="#6a7a9a"/><rect x="904.5" y="1002.5" width="9" height="9" fill="#d9532c" stroke="#7a2a10"/><circle cx="909" cy="1007" r="2" fill="#f5e0c8"/>
<rect x="1024" y="1006" width="9" height="12" fill="#f4f4f0" stroke="#6a7a9a"/><rect x="1019.5" y="1003.5" width="9" height="9" fill="#d9532c" stroke="#7a2a10"/><circle cx="1024" cy="1008" r="2" fill="#f5e0c8"/>
</g>
<g>
<text x="226" y="1013" class="w" textLength="30" lengthAdjust="spacingAndGlyphs">09_10</text>
<text x="343" y="1013" class="w" textLength="42" lengthAdjust="spacingAndGlyphs">10 класс</text>
<text x="458" y="1013" class="w" textLength="69" lengthAdjust="spacingAndGlyphs">Microsoft Fr...</text>
<text x="574" y="1013" class="w" textLength="67" lengthAdjust="spacingAndGlyphs">server - Уд...</text>
<text x="689" y="1013" style="fill:#ffc040;font-weight:bold">2</text>
<text x="701" y="1013" class="w" textLength="51" lengthAdjust="spacingAndGlyphs">Microsof...</text><path d="M767 1009h6l-3 3z" fill="#fff"/>
<text x="806" y="1013" class="w" textLength="32" lengthAdjust="spacingAndGlyphs">этапы</text>
<text x="922" y="1013" class="w" textLength="41" lengthAdjust="spacingAndGlyphs">алг_лин</text>
<text x="1040" y="1014" class="w" textLength="41" lengthAdjust="spacingAndGlyphs">алг_лин</text>
</g>
<rect x="1134" y="1000" width="16" height="19" fill="#3f7ce0"/><text x="1134.5" y="1013" class="w" textLength="15" lengthAdjust="spacingAndGlyphs">RU</text>
<rect x="1169" y="995" width="111" height="29" fill="url(#tr)"/><rect x="1169" y="995" width="1" height="29" fill="#0a4fb0"/>
<circle cx="1169" cy="1009" r="8.5" fill="#3f8fe8" stroke="#c8e4fc"/><path d="M1171 1005l-4 4 4 4" fill="none" stroke="#fff" stroke-width="2"/>
<rect x="1186" y="1002" width="8" height="9" fill="#8aa0d8" stroke="#334"/><rect x="1180" y="1008" width="8" height="9" fill="#c0d0f0" stroke="#334"/>
<path d="M1198 1002h4l1 8 5-8h3l-5 9 5 6h-13z" fill="#e01830"/><path d="M1204 1010l7 8h-7z" fill="#000"/>
<circle cx="1223" cy="1009" r="6.5" fill="#e8e8d8" stroke="#555"/><circle cx="1223" cy="1009" r="2.5" fill="#7a9a5a"/><path d="M1222 1008l8 8M1230 1008l-8 8" stroke="#d01818" stroke-width="2"/>
<text x="1239" y="1013" class="w" textLength="28" lengthAdjust="spacingAndGlyphs">15:29</text>
</svg>
</body></html>
